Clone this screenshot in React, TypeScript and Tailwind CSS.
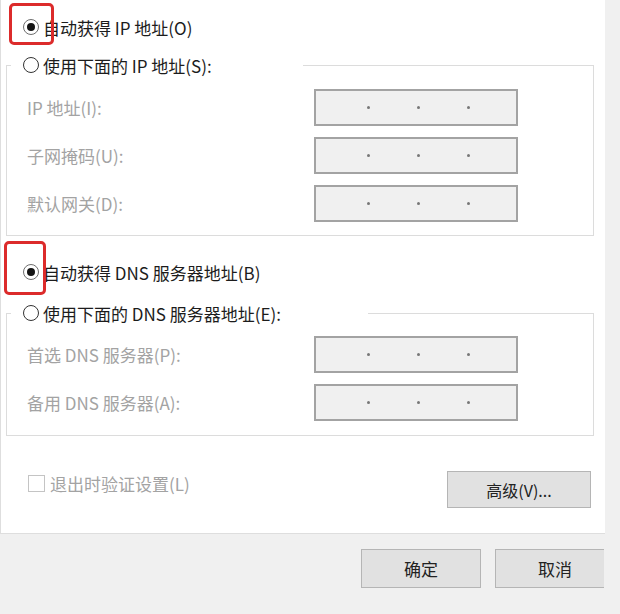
import clsx from "clsx";

const FONT = "font-['Noto_Sans_CJK_SC','Noto_Sans',sans-serif]";

function Radio({ checked }: { checked?: boolean }) {
  return (
    <span
      className={clsx(
        "flex h-[16px] w-[16px] shrink-0 items-center justify-center rounded-full border-[1.5px] bg-white",
        checked ? "border-[#6e6e6e]" : "border-[#333333]"
      )}
    >
      {checked && <span className="h-[8px] w-[8px] rounded-full bg-[#141414]" />}
    </span>
  );
}

function RadioRow({ checked, label }: { checked?: boolean; label: string }) {
  return (
    <div className="flex h-[24px] items-center gap-[4px]">
      <Radio checked={checked} />
      <span className="text-[17px] leading-none text-[#1c1c1c]">{label}</span>
    </div>
  );
}

function IpBox() {
  return (
    <div className="flex h-[37px] w-[204px] items-center gap-[47px] border-2 border-[#a3a3a3] bg-[#f0f0f0] pl-[51px]">
      <span className="h-[3px] w-[3px] rounded-full bg-[#777777]" />
      <span className="h-[3px] w-[3px] rounded-full bg-[#777777]" />
      <span className="h-[3px] w-[3px] rounded-full bg-[#777777]" />
    </div>
  );
}

function GroupBox({
  legend,
  legendWidth,
  rows,
  padTop,
  padBottom,
}: {
  legend: string;
  legendWidth: string;
  rows: string[];
  padTop: string;
  padBottom: string;
}) {
  return (
    <fieldset className="ml-[5px] w-[588px] border border-[#dcdcdc]">
      <legend className={clsx("ml-[4px] bg-white pl-[12px]", legendWidth)}>
        <RadioRow label={legend} />
      </legend>
      <div className={clsx("flex flex-col gap-[11px] pl-[20px]", padTop, padBottom)}>
        {rows.map((r) => (
          <div key={r} className="grid grid-cols-[287px_204px] items-center">
            <span className="text-[17px] leading-none text-[#a3a3a3]">{r}</span>
            <IpBox />
          </div>
        ))}
      </div>
    </fieldset>
  );
}

export default function App() {
  return (
    <div className={clsx("flex h-[614px] w-[620px] flex-col overflow-hidden bg-[#f0f0f0]", FONT)}>
      <div className="relative h-[534px] w-[605px] border-b border-l border-[#dedede] bg-white pt-[15px]">
        <div className="pl-[22px]">
          <RadioRow checked label="自动获得 IP 地址(O)" />
        </div>
        <div className="mt-[14px]">
          <GroupBox
            legend="使用下面的 IP 地址(S):"
            legendWidth="w-[292px]"
            rows={["IP 地址(I):", "子网掩码(U):", "默认网关(D):"]}
            padTop="pt-[12px]"
            padBottom="pb-[13px]"
          />
        </div>
        <div className="mt-[24px] pl-[22px]">
          <RadioRow checked label="自动获得 DNS 服务器地址(B)" />
        </div>
        <div className="mt-[17px]">
          <GroupBox
            legend="使用下面的 DNS 服务器地址(E):"
            legendWidth="w-[357px]"
            rows={["首选 DNS 服务器(P):", "备用 DNS 服务器(A):"]}
            padTop="pt-[11px]"
            padBottom="pb-[14px]"
          />
        </div>
        <div className="mt-[35px] flex items-start justify-between pl-[27px] pr-[14px]">
          <div className="flex h-[24px] items-center gap-[5px]">
            <span className="h-[17px] w-[17px] border border-[#c4c4c4] bg-white" />
            <span className="text-[17px] leading-none text-[#a3a3a3]">退出时验证设置(L)</span>
          </div>
          <button className="flex h-[37px] w-[144px] items-center justify-center border border-[#b5b5b5] bg-[#e1e1e1] text-[16px] text-[#222222]">
            高级(V)...
          </button>
        </div>

        {/* red highlight marks */}
        <div className="absolute left-[8px] top-[3px] h-[42px] w-[45px] rounded-[5px] border-[3px] border-[#dc2b2b]" />
        <div className="absolute left-[3px] top-[241px] h-[54px] w-[42px] rounded-[5px] border-[3px] border-[#dc2b2b]" />
      </div>

      <div className="flex gap-[14px] pl-[361px] pt-[15px]">
        <button className="flex h-[39px] w-[120px] items-center justify-center border border-[#b5b5b5] bg-[#e1e1e1] text-[17px] text-[#222222]">
          确定
        </button>
        <button className="flex h-[39px] w-[109px] items-center border border-r-0 border-[#b5b5b5] bg-[#e1e1e1] pl-[42px] text-[17px] text-[#222222]">
          取消
        </button>
      </div>
    </div>
  );
}
